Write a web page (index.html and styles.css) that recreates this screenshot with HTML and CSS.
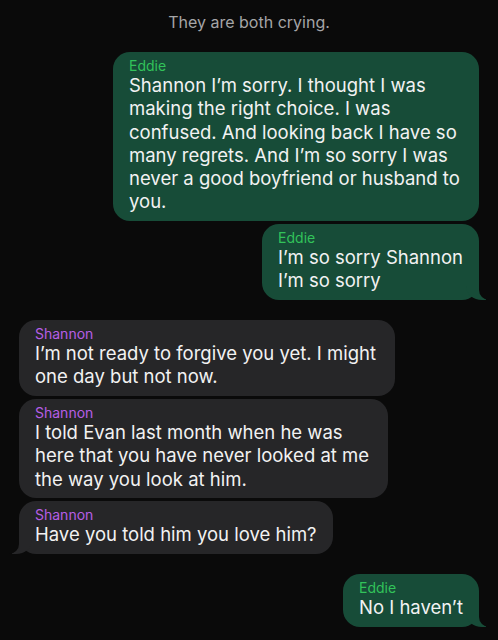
FILE: index.html
```html
<!DOCTYPE html>
<html lang="en">
<head>
    <meta charset="UTF-8">
    <meta name="viewport" content="width=device-width, initial-scale=1.0">
    <title>Messages</title>
    <link rel="stylesheet" href="styles.css">
</head>
<body>
    <div class="thread">
        <p class="note">They are both crying.</p>

        <!-- Eddie -->
        <div class="msg sent">
            <span class="name">Eddie</span>
            <p>Shannon I’m sorry. I thought I was making the right choice. I was confused. And looking back I have so many regrets. And I’m so sorry I was never a good boyfriend or husband to you.</p>
        </div>
        <div class="msg sent tail">
            <span class="name">Eddie</span>
            <p>I’m so sorry Shannon<br>I’m so sorry</p>
        </div>

        <!-- Shannon -->
        <div class="msg received wide gap">
            <span class="name">Shannon</span>
            <p>I’m not ready to forgive you yet. I might one day but not now.</p>
        </div>
        <div class="msg received mid">
            <span class="name">Shannon</span>
            <p>I told Evan last month when he was here that you have never looked at me the way you look at him.</p>
        </div>
        <div class="msg received tail">
            <span class="name">Shannon</span>
            <p>Have you told him you love him?</p>
        </div>

        <div class="msg sent tail gap">
            <span class="name">Eddie</span>
            <p>No I haven’t</p>
        </div>
    </div>
</body>
</html>
```

FILE: styles.css
```css
body {
    margin: 0;
    background-color: #0a0a0a;
    font-family: Inter, "Noto Sans", sans-serif;
    color: #f2f2f2;
}
.thread {
    display: flex;
    flex-direction: column;
    gap: 3px;
    padding: 12px 19px 20px;
}
.note {
    margin: 0 0 17px;
    text-align: center;
    font-size: 16px;
    line-height: 20px;
    color: #a5a5a7;
}
.msg {
    position: relative;
    max-width: 334px;
    padding: 6px 16px 7.4px;
    border-radius: 17px;
}
.msg.wide {
    max-width: 344px;
}
.msg.mid {
    max-width: 337px;
}
.msg p {
    margin: 0;
    font-size: 18.5px;
    line-height: 23.3px;
}
.name {
    display: block;
    font-size: 14px;
    line-height: 16px;
}
.sent {
    align-self: flex-end;
    background-color: #174c38;
}
.sent .name {
    color: #32c35a;
}
.received {
    align-self: flex-start;
    background-color: #262628;
}
.received .name {
    color: #b75ee6;
}
.gap {
    margin-top: 17px;
}

/* bubble tails */
.tail::before,
.tail::after {
    content: "";
    position: absolute;
    bottom: 0;
    height: 20px;
}
.sent.tail::before {
    right: -7px;
    width: 20px;
    background-color: #174c38;
    border-bottom-left-radius: 16px 14px;
}
.sent.tail::after {
    right: -26px;
    width: 26px;
    background-color: #0a0a0a;
    border-bottom-left-radius: 10px;
}
.received.tail::before {
    left: -7px;
    width: 20px;
    background-color: #262628;
    border-bottom-right-radius: 16px 14px;
}
.received.tail::after {
    left: -26px;
    width: 26px;
    background-color: #0a0a0a;
    border-bottom-right-radius: 10px;
}
```
